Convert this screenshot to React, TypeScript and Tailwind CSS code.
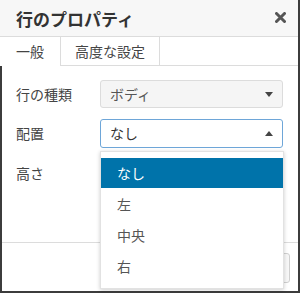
import React from 'react';

/* ─── Row properties dialog with an open "配置" select ─── */

const font = { fontFamily: '"Noto Sans CJK JP", "Noto Sans", sans-serif' };

const options = ['なし', '左', '中央', '右'];

function Caret({ up }: { up?: boolean }) {
  return (
    <svg width="8" height="5" viewBox="0 0 8 5" className="shrink-0">
      <polygon points={up ? '0,5 8,5 4,0' : '0,0 8,0 4,5'} fill="#444" />
    </svg>
  );
}

export default function App() {
  return (
    <div className="relative w-[300px] h-[293px] overflow-hidden bg-white" style={font}>
      <div className="flex flex-col h-full border-r-2 border-b-2 border-[#3c3c3c]">
        {/* header */}
        <div className="flex items-center justify-between h-[37px] pl-4 pr-[12px] bg-[#f7f7f7] border-b border-[#dcdcdc] shrink-0">
          <span className="text-[17px] font-bold text-[#333] leading-none">行のプロパティ</span>
          <svg width="11" height="11" viewBox="0 0 11 11" className="-mt-[1px]">
            <path d="M1.5 1.5 L9.5 9.5 M9.5 1.5 L1.5 9.5" stroke="#555" strokeWidth="3" strokeLinecap="round" />
          </svg>
        </div>

        <div className="flex flex-col flex-1 border-l-2 border-[#3c3c3c]">
          {/* tabs */}
          <div className="flex h-[29px] shrink-0 -ml-[2px]">
            <div className="flex items-center px-4 bg-white border-r border-[#dcdcdc] text-[14px] text-[#444]">一般</div>
            <div className="flex items-center px-[14px] bg-white border-r border-b border-[#dcdcdc] text-[14px] text-[#444]">高度な設定</div>
            <div className="flex-1 border-b border-[#dcdcdc]" />
          </div>

          {/* form */}
          <div className="flex flex-col pl-[14px] pr-[15px] pt-[14px] gap-[11px] h-[176px]">
            <div className="flex items-center">
              <span className="w-[84px] text-[14px] text-[#444]">行の種類</span>
              <div className="flex items-center justify-between h-[28px] flex-1 pl-[9px] pr-[9px] rounded-[3px] border border-[#dcdcdc] bg-[#f5f5f5] text-[14px] text-[#555]">
                <span>ボディ</span>
                <Caret />
              </div>
            </div>
            <div className="flex items-center">
              <span className="w-[84px] text-[14px] text-[#444]">配置</span>
              <div className="flex items-center justify-between h-[29px] flex-1 pl-[9px] pr-[9px] rounded-[3px] border border-[#6ea6d8] bg-white text-[14px] text-[#333]">
                <span>なし</span>
                <Caret up />
              </div>
            </div>
            <div className="flex items-center h-[28px]">
              <span className="text-[14px] text-[#444]">高さ</span>
            </div>
          </div>

          {/* footer */}
          <div className="flex justify-end flex-1 border-t border-[#dcdcdc] pt-[10px] pr-[8px]">
            <div className="w-[80px] h-[30px] rounded-[3px] border border-[#d0d0d0] bg-[#f7f7f7]" />
          </div>
        </div>
      </div>

      {/* open list */}
      <div className="absolute left-[100px] top-[151px] w-[184px] h-[138px] pt-[6px] bg-white border border-[#e2e2e2] shadow-[0_1px_4px_rgba(0,0,0,0.2)]">
        {options.map((o, i) => (
          <div
            key={o}
            className={
              i === 0
                ? 'flex items-center h-[30px] mb-[1px] pl-[16px] bg-[#0073aa] text-white text-[14px]'
                : 'flex items-center h-[31px] pl-[16px] text-[#555] text-[14px]'
            }
          >
            {o}
          </div>
        ))}
      </div>
    </div>
  );
}
